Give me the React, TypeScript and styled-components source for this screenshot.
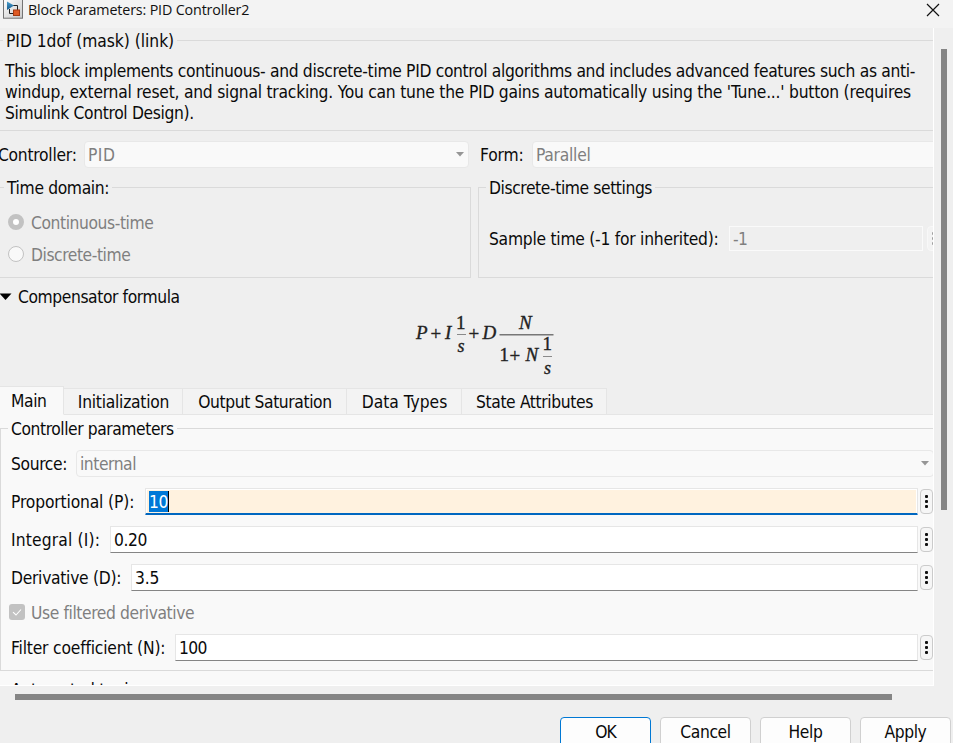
import React from 'react';
import styled, { createGlobalStyle, css } from 'styled-components';

const Global = createGlobalStyle`
  * { box-sizing: border-box; }
  html, body { margin: 0; padding: 0; overflow: hidden; background: #efefef; }
  body { font: 17.3px/21px "DejaVu Sans Condensed", "DejaVu Sans", sans-serif; font-stretch: condensed; color: #0a0a0a; }
`;

const Dialog = styled.div`
  width: 953px;
  height: 743px;
  overflow: hidden;
  display: flex;
  flex-direction: column;
  background: #efefef;
`;

const TitleBar = styled.header`
  height: 28px;
  flex: none;
  display: flex;
  align-items: flex-start;
  background: #f3f3f3;
  padding-left: 3px;
`;

const Title = styled.h1`
  margin: 0 0 0 5px;
  flex: 1;
  font: 400 14.3px/20px "Open Sans", sans-serif;
  letter-spacing: -0.15px;
  color: #111;
`;

const CloseButton = styled.button`
  border: 0;
  background: none;
  padding: 2px 13px 0 0;
  height: 18px;
  line-height: 0;
`;

const Middle = styled.div`
  display: flex;
  height: 658px;
  flex: none;
`;

const Viewport = styled.main`
  width: 934px;
  height: 658px;
  overflow: hidden;
  border-right: 1px solid #fff;
  padding-top: 2px;
`;

const VerticalTrack = styled.div`
  padding: 21px 0 0 7px;
`;

const VerticalThumb = styled.div`
  width: 6px;
  height: 461px;
  background: #858585;
`;

const HorizontalTrack = styled.div`
  flex: none;
  height: 31px;
  padding: 8px 0 0 15px;
`;

const HorizontalThumb = styled.div`
  width: 877px;
  height: 6px;
  background: #858585;
`;

const Text = styled.span<{ $ls?: number; $muted?: boolean }>`
  display: block;
  padding-top: 1px;
  margin-bottom: -1px;
  white-space: nowrap;
  letter-spacing: ${(p) => p.$ls ?? -0.3}px;
  color: ${(p) => (p.$muted ? '#7f7f7f' : 'inherit')};
`;

const Group = styled.fieldset<{ $w: number; $h: number; $ml?: number }>`
  margin: 0 0 0 ${(p) => p.$ml ?? 0}px;
  padding: 0;
  border: 1px solid #dadada;
  width: ${(p) => p.$w}px;
  min-width: 0;
  height: ${(p) => p.$h}px;
  flex: none;
`;

const Legend = styled.legend<{ $ml: number }>`
  height: 21px;
  margin-left: ${(p) => p.$ml}px;
  padding: 0 3px;
`;

const Description = styled.div`
  padding: 9px 0 0 12px;
`;

const SelectRow = styled.div`
  display: flex;
  align-items: center;
  height: 26px;
  margin: 10px 0 10px -2px;
`;

const RowLabel = styled.label<{ $w: number; $pad?: number }>`
  width: ${(p) => p.$w}px;
  padding-left: ${(p) => p.$pad ?? 0}px;
  flex: none;
`;

const Combo = styled.div<{ $w: number }>`
  width: ${(p) => p.$w}px;
  height: 27px;
  flex: none;
  border: 1px solid #e8e8e8;
  border-radius: 4px;
  background: #f9f9f9;
  display: flex;
  align-items: center;
  justify-content: space-between;
  padding: 0 4px 0 3px;
`;

const GroupPair = styled.div`
  display: flex;
`;

const RadioList = styled.div`
  display: flex;
  flex-direction: column;
  gap: 11px;
  padding: 14px 0 0 15px;
`;

const OptionRow = styled.label`
  display: flex;
  align-items: center;
  height: 21px;
  gap: 7px;
`;

const Radio = styled.span<{ $on?: boolean }>`
  width: 16px;
  height: 16px;
  border-radius: 50%;
  margin-top: -2px;
  ${(p) =>
    p.$on
      ? css`border: 5px solid #c2c2c2; background: #fff;`
      : css`border: 1px solid #c2c2c2; background: #f9f9f9;`}
`;

const SampleRow = styled.div`
  display: flex;
  align-items: center;
  padding: 28px 0 0 10px;
`;

const DisabledInput = styled.div`
  width: 194px;
  height: 25px;
  margin-right: 2px;
  border: 1px solid #fafafa;
  padding: 1px 0 0 3px;
  flex: none;
`;

const Disclosure = styled.div`
  display: flex;
  align-items: center;
  height: 38px;
  gap: 6px;
`;

const DisclosureLabel = styled.div`
  padding-bottom: 1px;
`;

const Formula = styled.div`
  height: 70px;
  padding-left: 410px;
  line-height: 0;
`;

const Tabs = styled.nav`
  display: flex;
  align-items: flex-end;
  height: 29px;
  margin-bottom: -1px;
`;

const Tab = styled.div<{ $w: number; $active?: boolean }>`
  width: ${(p) => p.$w}px;
  height: ${(p) => (p.$active ? 29 : 27)}px;
  flex: none;
  display: flex;
  justify-content: center;
  align-items: center;
  border: 1px solid #e5e5e5;
  border-left: 0;
  background: #f3f3f3;
  padding-left: 1px;
  ${(p) =>
    p.$active &&
    css`
      background: #f9f9f9;
      border-bottom-color: #f9f9f9;
      justify-content: flex-start;
      padding-left: 11px;
    `}
`;

const TabRest = styled.div`
  flex: 1;
  height: 1px;
  background: #e5e5e5;
`;

const Pane = styled.section`
  height: 272px;
  overflow: hidden;
  background: #f9f9f9;
  padding-top: 4px;
  border-bottom: 1px solid #fff;
`;

const Rows = styled.div`
  display: flex;
  flex-direction: column;
  padding-top: 11px;
`;

const Controls = styled.div`
  width: 932px;
`;

const Field = styled.div<{ $gap?: number }>`
  display: flex;
  align-items: center;
  height: 27px;
  margin-bottom: ${(p) => p.$gap ?? 11}px;
`;

const Input = styled.div<{ $active?: boolean }>`
  flex: 1;
  height: 27px;
  display: flex;
  align-items: center;
  border: 1px solid #e6e6e6;
  border-bottom: 1px solid #858585;
  background: #fff;
  padding-left: 3px;
  ${(p) =>
    p.$active &&
    css`
      background: #fff2df;
      border-bottom: 2px solid #0067c0;
      box-shadow: inset 1px 1px #fff, inset -1px 0 #fff;
      border-radius: 1px;
    `}
`;

const Selection = styled.span`
  height: 21px;
  width: 20px;
  background: #0078d7;
  color: #fff;
  border-right: 1px solid #000;
`;

const MoreButton = styled.button<{ $muted?: boolean }>`
  width: 13px;
  height: 25px;
  flex: none;
  margin: 0 0 0 2px;
  padding: 0;
  border: 1px solid ${(p) => (p.$muted ? '#f8f8f8' : '#cbcbcb')};
  border-radius: 4px;
  background: ${(p) => (p.$muted ? '#f3f3f3' : '#f6f6f6')};
  display: flex;
  flex-direction: column;
  align-items: center;
  justify-content: center;
  gap: 2px;

  i {
    width: 3px;
    height: 3px;
    border-radius: 1px;
    background: ${(p) => (p.$muted ? '#a0a0a0' : '#111')};
  }
`;

const CheckBox = styled.span`
  width: 16px;
  height: 16px;
  margin-top: -2px;
  border-radius: 3px;
  background: #c2c2c2;
  line-height: 0;
`;

const FilterToggle = styled(OptionRow)`
  height: 23px;
  padding: 2px 0 0 8px;
  gap: 6px;
  margin-bottom: 11px;
`;

const NextSection = styled.div`
  height: 14px;
  overflow: hidden;
  padding: 8px 0 0 11px;
`;

const Footer = styled.footer`
  display: flex;
  gap: 9px;
  padding-left: 560px;
  height: 26px;
  flex: none;
`;

const FooterButton = styled.button<{ $primary?: boolean }>`
  width: 91px;
  height: 34px;
  flex: none;
  padding: 3px 0 0;
  display: flex;
  justify-content: center;
  font: inherit;
  color: inherit;
  background: #fdfdfd;
  border: 1px solid ${(p) => (p.$primary ? '#0078d4' : '#d0d0d0')};
  border-radius: 4px;
`;

const Symbol = styled.text<{ $upright?: boolean; $size?: number }>`
  font: ${(p) => (p.$upright ? 'normal' : 'italic')} 400 ${(p) => p.$size ?? 19}px "Liberation Serif", serif;
  fill: #222;
  stroke: #222;
  stroke-width: 0.35px;
`;

const Arrow = () => (
  <svg width="8" height="5" viewBox="0 0 8 5">
    <path d="M0 0H8L4 4.5Z" fill="#969696" />
  </svg>
);

const More = ({ muted }: { muted?: boolean }) => (
  <MoreButton $muted={muted} aria-label="More">
    <i />
    <i />
    <i />
  </MoreButton>
);

const AppIcon = () => (
  <svg width="20" height="19" viewBox="0 0 20 19">
    <defs>
      <linearGradient id="tile" x1="0" y1="0" x2="1" y2="1">
        <stop offset="0" stopColor="#fff" />
        <stop offset="1" stopColor="#c9c9c9" />
      </linearGradient>
      <linearGradient id="tri" x1="0" y1="0" x2="0" y2="1">
        <stop offset="0" stopColor="#4c9fce" />
        <stop offset="1" stopColor="#155a8c" />
      </linearGradient>
    </defs>
    <rect x="0.5" y="-1" width="19" height="19.2" fill="url(#tile)" stroke="#747474" />
    <path d="M10 5.5H14.500V10M10 13.500H6.500V9" fill="none" stroke="#222" />
    <path d="M4 1.500L11 5.500L4 10Z" fill="url(#tri)" />
    <rect x="10.5" y="10" width="6" height="5.5" fill="#df5a24" stroke="#a33a12" />
  </svg>
);

const Compensator = () => (
  <svg width="150" height="68" viewBox="410 316 150 68">
    <Symbol x="416" y="338.5">P</Symbol>
    <Symbol x="430.5" y="339.5" $upright>+</Symbol>
    <Symbol x="445" y="338.5">I</Symbol>
    <Symbol x="456" y="329" $upright>1</Symbol>
    <Symbol x="457.5" y="352" $size={18}>s</Symbol>
    <Symbol x="468.5" y="339.5" $upright>+</Symbol>
    <Symbol x="482.5" y="338.5">D</Symbol>
    <Symbol x="519" y="328.5">N</Symbol>
    <Symbol x="499.5" y="361" $upright>1</Symbol>
    <Symbol x="509.5" y="362" $upright>+</Symbol>
    <Symbol x="525.5" y="361">N</Symbol>
    <Symbol x="542.5" y="350" $upright>1</Symbol>
    <Symbol x="544" y="373.5" $size={18}>s</Symbol>
    <path d="M457 334.500H466M543 356.500H552" stroke="#8a8a8a" />
    <path d="M499.500 334.700H553.500" stroke="#777" strokeWidth="1.500" />
  </svg>
);

const FormulaArea = styled(Formula)`
  svg {
    overflow: visible;
  }
`;

const fields = [
  { label: 'Integral (I):', ls: 0.15, w: 109, value: '0.20', vls: -0.4, gap: 11 },
  { label: 'Derivative (D):', ls: -0.28, w: 130, value: '3.5', vls: -0.2, gap: 9 },
];

export default function App() {
  return (
    <Dialog>
      <Global />
      <TitleBar>
        <AppIcon />
        <Title>Block Parameters: PID Controller2</Title>
        <CloseButton aria-label="Close">
          <svg width="14" height="14" viewBox="0 0 14 14">
            <path d="M1 1L13 13M13 1L1 13" stroke="#111" strokeWidth="1.2" />
          </svg>
        </CloseButton>
      </TitleBar>
      <Middle>
        <Viewport>
          <Group $w={960} $h={101} $ml={-8}>
            <Legend $ml={10}>
              <Text $ls={-0.04}>PID 1dof (mask) (link)</Text>
            </Legend>
            <Description>
              <Text $ls={-0.322}>
                This block implements continuous- and discrete-time PID control algorithms and includes advanced features such as anti-
              </Text>
              <Text $ls={-0.23}>
                windup, external reset, and signal tracking. You can tune the PID gains automatically using the 'Tune...' button (requires
              </Text>
              <Text $ls={-0.34}>Simulink Control Design).</Text>
            </Description>
          </Group>
          <SelectRow>
            <RowLabel $w={86}>
              <Text $ls={-0.25}>Controller:</Text>
            </RowLabel>
            <Combo $w={385}>
              <Text $ls={0.5} $muted>PID</Text>
              <Arrow />
            </Combo>
            <RowLabel $w={63} $pad={11}>
              <Text $ls={-0.15}>Form:</Text>
            </RowLabel>
            <Combo $w={420}>
              <Text $ls={-0.25} $muted>Parallel</Text>
            </Combo>
          </SelectRow>
          <GroupPair>
            <Group $w={479} $h={101} $ml={-8}>
              <Legend $ml={11}>
                <Text $ls={-0.35}>Time domain:</Text>
              </Legend>
              <RadioList>
                <OptionRow>
                  <Radio $on />
                  <Text $ls={-0.41} $muted>Continuous-time</Text>
                </OptionRow>
                <OptionRow>
                  <Radio />
                  <Text $ls={-0.43} $muted>Discrete-time</Text>
                </OptionRow>
              </RadioList>
            </Group>
            <Group $w={480} $h={101} $ml={7}>
              <Legend $ml={7}>
                <Text $ls={-0.4}>Discrete-time settings</Text>
              </Legend>
              <SampleRow>
                <RowLabel $w={240}>
                  <Text $ls={-0.25}>Sample time (-1 for inherited):</Text>
                </RowLabel>
                <DisabledInput>
                  <Text $ls={-0.6} $muted>-1</Text>
                </DisabledInput>
                <More muted />
              </SampleRow>
            </Group>
          </GroupPair>
          <Disclosure>
            <svg width="12" height="8" viewBox="0 0 12 8">
              <path d="M-0.500 0.500H11.500L5.500 7Z" fill="#000" />
            </svg>
            <DisclosureLabel>
              <Text $ls={-0.4}>Compensator formula</Text>
            </DisclosureLabel>
          </Disclosure>
          <FormulaArea>
            <Compensator />
          </FormulaArea>
          <Tabs>
            <Tab $w={64} $active>
              <Text $ls={-0.4}>Main</Text>
            </Tab>
            <Tab $w={119}>
              <Text $ls={-0.25}>Initialization</Text>
            </Tab>
            <Tab $w={164}>
              <Text $ls={-0.383}>Output Saturation</Text>
            </Tab>
            <Tab $w={115}>
              <Text $ls={0}>Data Types</Text>
            </Tab>
            <Tab $w={145}>
              <Text $ls={-0.36}>State Attributes</Text>
            </Tab>
            <TabRest />
          </Tabs>
          <Pane>
            <Group $w={960} $h={253}>
              <Legend $ml={7}>
                <Text $ls={-0.422}>Controller parameters</Text>
              </Legend>
              <Rows>
                <Field>
                  <RowLabel $w={75} $pad={10}>
                    <Text $ls={-0.36}>Source:</Text>
                  </RowLabel>
                  <Combo $w={858}>
                    <Text $ls={-0.45} $muted>internal</Text>
                    <Arrow />
                  </Combo>
                </Field>
                <Controls>
                  <Field>
                    <RowLabel $w={144} $pad={10}>
                      <Text $ls={-0.14}>Proportional (P):</Text>
                    </RowLabel>
                    <Input $active>
                      <Selection>
                        <Text $ls={-0.5}>10</Text>
                      </Selection>
                    </Input>
                    <More />
                  </Field>
                  {fields.map((f) => (
                    <Field key={f.label} $gap={f.gap}>
                      <RowLabel $w={f.w} $pad={10}>
                        <Text $ls={f.ls}>{f.label}</Text>
                      </RowLabel>
                      <Input>
                        <Text $ls={f.vls}>{f.value}</Text>
                      </Input>
                      <More />
                    </Field>
                  ))}
                  <FilterToggle>
                    <CheckBox>
                      <svg width="16" height="16" viewBox="0 0 16 16">
                        <path d="M4 8.200L7 11L12 5.500" fill="none" stroke="#fff" strokeWidth="1.100" />
                      </svg>
                    </CheckBox>
                    <Text $ls={-0.39} $muted>Use filtered derivative</Text>
                  </FilterToggle>
                  <Field $gap={0}>
                    <RowLabel $w={174} $pad={10}>
                      <Text $ls={-0.18}>Filter coefficient (N):</Text>
                    </RowLabel>
                    <Input>
                      <Text $ls={-0.6}>100</Text>
                    </Input>
                    <More />
                  </Field>
                </Controls>
              </Rows>
            </Group>
            <NextSection>
              <Text $ls={-0.3}>Automated tuning</Text>
            </NextSection>
          </Pane>
        </Viewport>
        <VerticalTrack>
          <VerticalThumb />
        </VerticalTrack>
      </Middle>
      <HorizontalTrack>
        <HorizontalThumb />
      </HorizontalTrack>
      <Footer>
        <FooterButton $primary>
          <Text $ls={-1}>OK</Text>
        </FooterButton>
        <FooterButton>
          <Text $ls={-0.4}>Cancel</Text>
        </FooterButton>
        <FooterButton>
          <Text $ls={-0.4}>Help</Text>
        </FooterButton>
        <FooterButton>
          <Text $ls={-0.424}>Apply</Text>
        </FooterButton>
      </Footer>
    </Dialog>
  );
}
